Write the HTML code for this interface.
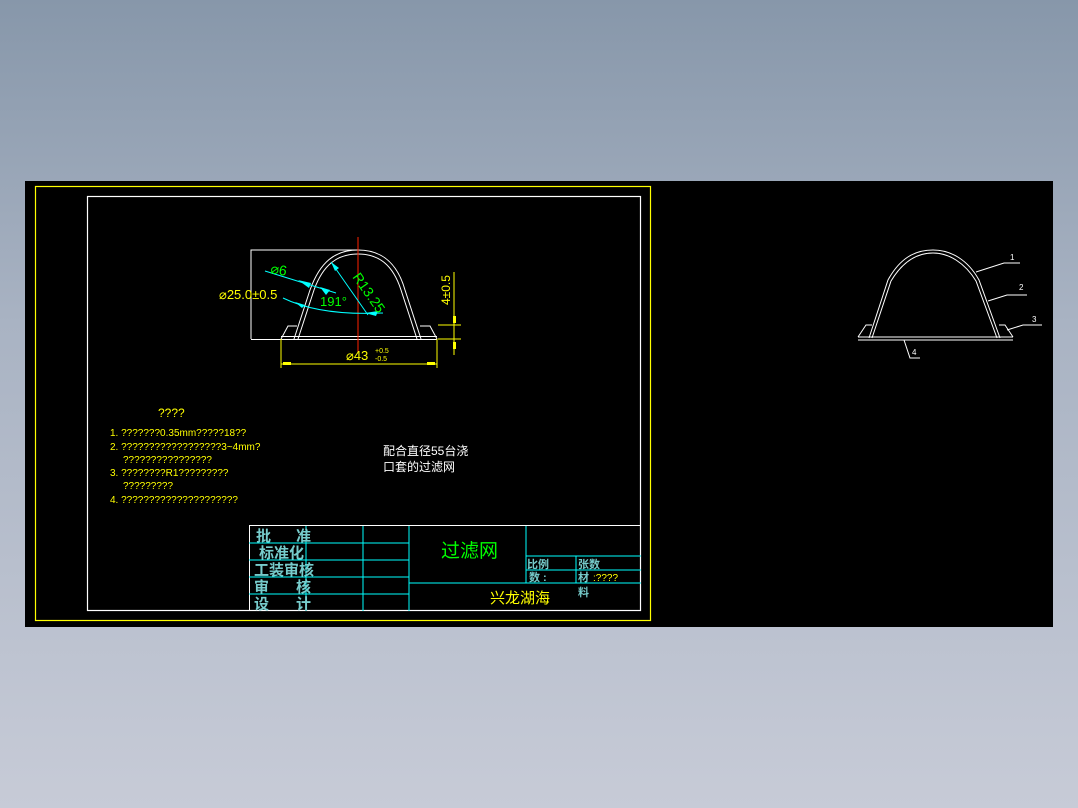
<!DOCTYPE html><html><head><meta charset="utf-8"><style>
body{margin:0;width:1078px;height:808px;overflow:hidden;background:linear-gradient(#8797aa,#a9b3c3 40%,#c7cbd7);}
svg{position:absolute;left:0;top:0}
text{font-family:"Liberation Sans","Noto Sans CJK SC",sans-serif}
</style></head><body>
<svg width="1078" height="808" viewBox="0 0 1078 808">
<rect x="25" y="181" width="1028" height="446" fill="#000"/>
<rect x="35.5" y="186.5" width="615" height="434" fill="none" stroke="#ff0" stroke-width="1.2"/>
<rect x="87.5" y="196.5" width="553" height="414" fill="none" stroke="#fff" stroke-width="1.2"/>
<rect x="249.5" y="525.5" width="391" height="85" fill="none" stroke="#fff"/>
<g stroke="#0ff" stroke-width="1" fill="none">
<path d="M306 526V611M363 526V611M409 526V611M526 526V583M576 556V583"/>
<path d="M249 543H409M249 560H409M249 577H409M249 594H409M526 556H641M526 570H641M409 583H641"/>
</g>
<g fill="#7cc" font-size="15" font-weight="bold">
<text x="256" y="541">批</text><text x="296" y="541">准</text>
<text x="259" y="558">标准化</text>
<text x="254" y="575">工装审核</text>
<text x="254" y="592">审</text><text x="296" y="592">核</text>
<text x="254" y="609">设</text><text x="296" y="609">计</text>
<text x="527" y="568" font-size="11">比例</text><text x="578" y="568" font-size="11">张数</text>
<text x="529" y="581" font-size="11">数 :</text><text x="578" y="581" font-size="11">材</text>
<text x="578" y="596" font-size="11">料</text>
</g>
<text x="593" y="581" fill="#ff0" font-size="10">:????</text>
<text x="441" y="557" fill="#0f0" font-size="19">过滤网</text>
<text x="490" y="603" fill="#ff0" font-size="15">兴龙湖海</text>
<g fill="#ff0" font-size="10">
<text x="158" y="417" font-size="12">????</text>
<text x="110" y="436">1. ???????0.35mm?????18??</text>
<text x="110" y="450">2. ??????????????????3~4mm?</text>
<text x="123" y="463">????????????????</text>
<text x="110" y="476">3. ????????R1?????????</text>
<text x="123" y="489">?????????</text>
<text x="110" y="503">4. ?????????????????????</text>
</g>
<text x="383" y="455" fill="#fff" font-size="12">配合直径55台浇</text>
<text x="383" y="471" fill="#fff" font-size="12">口套的过滤网</text>
<g fill="none" stroke="#fff" stroke-width="1">
<path d="M251 339V250H358"/>
<path d="M251 339.5H437"/>
<path d="M294 339L310 290C320 262 335 250 358 250C381 250 397 262 405 290L421 339"/>
<path d="M298 339L314 290C323 265 337 254 358 254C379 254 393 265 401 290L417 339"/>
<path d="M281 339L288 326H297M437 339L430 326H420"/>
<path d="M281 336.5H437"/>
</g>
<path d="M358 237V315M358 311V352" stroke="#f20" stroke-width="1"/>
<g stroke="#0ff" fill="none" stroke-width="1">
<path d="M265 271L336 293M283 298Q320 316 383 313M331 262L368 315"/>
</g>
<g fill="#0ff"><polygon points="298,280 311,283 309,288"/><polygon points="320,287 330,290 326,295"/><polygon points="295,302 305,305 302,308"/><polygon points="365,313 378,311 376,316"/><polygon points="331,262 339,268 335,271"/></g>
<g fill="#0f0" font-size="14"><text x="270" y="273" transform="rotate(10 270 273)">⌀6</text><text x="320" y="306" font-size="13">191°</text><text x="352" y="277" transform="rotate(55 352 277)">R13.25</text></g>
<g stroke="#ff0" fill="none" stroke-width="1"><path d="M281 339V368M437 339V368M281 364H437M438 325H461M438 339H461M454 272V355"/></g>
<g fill="#ff0"><rect x="283" y="362" width="8" height="3"/><rect x="427" y="362" width="8" height="3"/><rect x="453" y="316" width="3" height="7"/><rect x="453" y="342" width="3" height="7"/></g>
<text x="219" y="299" fill="#ff0" font-size="13">⌀25.0±0.5</text>
<text x="346" y="360" fill="#ff0" font-size="13">⌀43</text><text x="375" y="353" fill="#ff0" font-size="7">+0.5</text><text x="375" y="361" fill="#ff0" font-size="7">-0.5</text>
<text x="450" y="305" fill="#ff0" font-size="12" transform="rotate(-90 450 305)">4±0.5</text>
<g fill="none" stroke="#fff" stroke-width="1">
<path d="M858 337H1013M858 340H1013M858 337L866 325H872M1013 337L1005 325H999"/>
<path d="M869 338L888 280C900 258 915 250 933 250C951 250 968 260 979 280L1000 338"/>
<path d="M872 338L891 281C903 261 917 253 933 253C949 253 965 263 976 281L997 338"/>
<path d="M976 272L1004 263H1020M988 301L1007 295H1027M1007 330L1023 325H1042M904 340L910 358H920"/>
</g>
<g fill="#fff" font-size="8"><text x="1010" y="260">1</text><text x="1019" y="290">2</text><text x="1032" y="322">3</text><text x="912" y="355">4</text></g>
</svg>
</body></html>
